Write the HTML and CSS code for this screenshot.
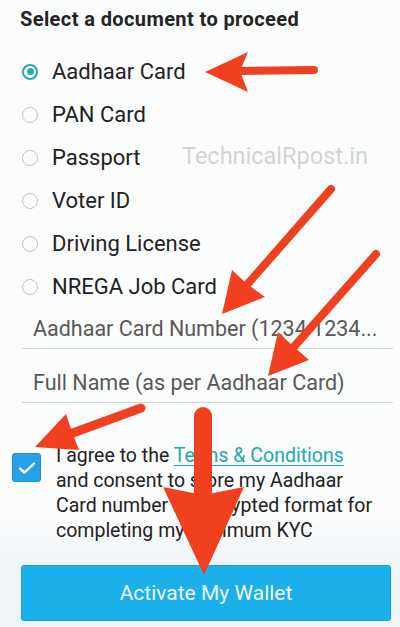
FILE: index.html
```html
<!DOCTYPE html>
<html>
<head>
<meta charset="utf-8">
<link rel="stylesheet" href="styles.css">
</head>
<body>
<div class="page">
  <h1 class="title">Select a document to proceed</h1>
  <div class="options">
    <div class="option"><span class="radio checked"></span><span class="label">Aadhaar Card</span></div>
    <div class="option"><span class="radio"></span><span class="label">PAN Card</span></div>
    <div class="option"><span class="radio"></span><span class="label">Passport</span></div>
    <div class="option"><span class="radio"></span><span class="label">Voter ID</span></div>
    <div class="option"><span class="radio"></span><span class="label">Driving License</span></div>
    <div class="option"><span class="radio"></span><span class="label">NREGA Job Card</span></div>
  </div>
  <div class="fields">
    <div class="field">Aadhaar Card Number (1234 1234...</div>
    <div class="field second">Full Name (as per Aadhaar Card)</div>
  </div>
  <div class="consent">
    <span class="checkbox">
      <svg width="18" height="14" viewBox="0 0 18 14"><path d="M2 7.5 L6.5 11.5 L16 2.5" fill="none" stroke="#fff" stroke-width="2.4" stroke-linecap="round" stroke-linejoin="round"/></svg>
    </span>
    <p class="consent-text">I agree to the <span class="link">Terms &amp; Conditions</span><br>and consent to store my Aadhaar<br>Card number in encrypted format for<br>completing my minimum KYC</p>
  </div>
  <div class="footer">
    <div class="button">Activate My Wallet</div>
  </div>

  <div class="watermark">TechnicalRpost.in</div>

  <svg class="arrows" width="400" height="627" viewBox="0 0 400 627">
    <g fill="#f0401f" stroke="#f0401f" stroke-linecap="round">
      <line x1="238" y1="71" x2="314" y2="70" stroke-width="8"/>
      <path d="M205 72 L248 52 L240 71 L248 92 Z" stroke="none"/>
      <line x1="331" y1="189" x2="245" y2="287" stroke-width="8"/>
      <path d="M222 314 L232 270 L247 284 L265 297 Z" stroke="none"/>
      <line x1="376" y1="254" x2="292" y2="349" stroke-width="8"/>
      <path d="M268 376 L278 332 L293 346 L309 360 Z" stroke="none"/>
      <line x1="141" y1="408" x2="70" y2="434" stroke-width="9"/>
      <path d="M35 447 L66 414 L72 432 L79 450 Z" stroke="none"/>
      <line x1="203" y1="416" x2="203" y2="492" stroke-width="18"/>
      <path d="M204 575 L163 487 L203 495 L244 487 Z" stroke="none"/>
    </g>
  </svg>
</div>
</body>
</html>
```
FILE: styles.css
```css
* { box-sizing: border-box; }
html, body { margin: 0; padding: 0; background: #fbfcfc; }
body { font-family: Roboto, "Noto Sans", sans-serif; color: #222; }

.page {
  position: relative;
  width: 400px;
  height: 627px;
  overflow: hidden;
  padding-top: 7px;
  background: linear-gradient(#fbfcfc 0, #fbfcfc 520px, #f0f5f8 560px, #eef4f7 627px);
}

.title {
  margin: 0 0 0 20px;
  font-size: 20px;
  line-height: 24px;
  font-weight: 700;
  letter-spacing: 0.4px;
  color: #242424;
}

.options { margin-top: 19px; }

.option {
  height: 43px;
  display: flex;
  align-items: center;
  padding-left: 22px;
  gap: 14px;
}

.radio {
  width: 16px;
  height: 16px;
  border: 1.5px solid #c4c4c4;
  border-radius: 50%;
  flex: none;
  display: flex;
  align-items: center;
  justify-content: center;
}
.radio.checked { border: 2px solid #27a8b6; }
.radio.checked::after {
  content: "";
  width: 7px;
  height: 7px;
  border-radius: 50%;
  background: #27a8b6;
}

.label {
  font-size: 22px;
  color: #222;
}

.fields { margin: 1px 7px 0 22px; }

.field {
  height: 40px;
  padding: 8px 11px;
  font-size: 21.5px;
  line-height: 24px;
  color: #585858;
  border-bottom: 1px solid #d2d6d8;
  white-space: nowrap;
  overflow: hidden;
}
.field.second { margin-top: 14px; }

.consent {
  margin-top: 40px;
  display: flex;
  align-items: flex-start;
  padding-left: 12px;
}

.checkbox {
  width: 29px;
  height: 29px;
  margin-top: 10px;
  flex: none;
  background: #28a0e8;
  border: 1px solid #1f8fd4;
  border-radius: 3px;
  display: flex;
  align-items: center;
  justify-content: center;
}

.consent-text {
  margin: 0 0 0 15px;
  font-size: 19.5px;
  line-height: 25px;
  color: #222;
  white-space: nowrap;
}

.link {
  color: #23a7b4;
  text-decoration: underline;
  text-underline-offset: 3px;
}

.footer { padding: 22px 9px 6px 21px; }

.button {
  height: 56px;
  background: #1cb0ea;
  border: 1px solid #16a0d8;
  border-radius: 3px;
  color: #eaf7fd;
  font-size: 21px;
  display: flex;
  align-items: center;
  justify-content: center;
}

.watermark {
  position: absolute;
  left: 182px;
  top: 142px;
  font-size: 23.5px;
  color: rgba(160, 160, 160, 0.45);
}

.arrows {
  position: absolute;
  left: 0;
  top: 0;
  pointer-events: none;
}
```
